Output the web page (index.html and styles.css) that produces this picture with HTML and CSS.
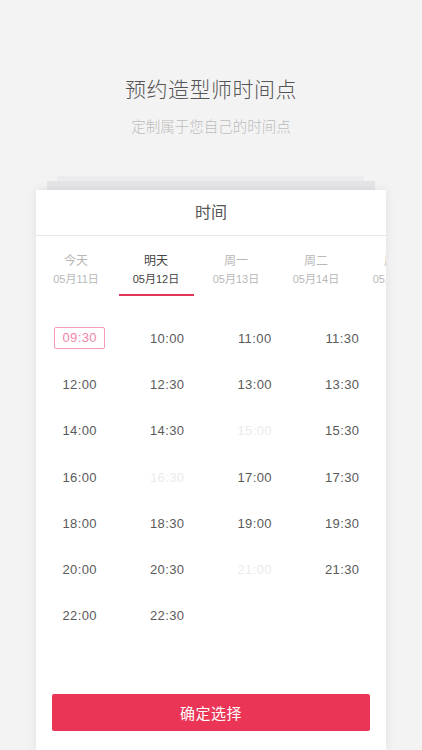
FILE: index.html
```html
<!DOCTYPE html>
<html lang="zh-CN">
<head>
  <meta charset="UTF-8">
  <meta name="viewport" content="width=device-width, initial-scale=1.0">
  <title>预约造型师时间点</title>
  <link rel="stylesheet" href="styles.css">
</head>
<body>
  <header class="intro">
    <h1>预约造型师时间点</h1>
    <p>定制属于您自己的时间点</p>
  </header>

  <div class="stack stack-back"></div>
  <div class="stack stack-mid"></div>

  <div class="card">
    <div class="card-title">时间</div>

    <div class="tabs">
      <div class="tab"><span class="tab-day">今天</span><span class="tab-date">05月11日</span></div>
      <div class="tab active"><span class="tab-day">明天</span><span class="tab-date">05月12日</span></div>
      <div class="tab"><span class="tab-day">周一</span><span class="tab-date">05月13日</span></div>
      <div class="tab"><span class="tab-day">周二</span><span class="tab-date">05月14日</span></div>
      <div class="tab"><span class="tab-day">周三</span><span class="tab-date">05月15日</span></div>
    </div>

    <div class="times">
      <div class="slot"><span class="selected">09:30</span></div>
      <div class="slot">10:00</div>
      <div class="slot">11:00</div>
      <div class="slot">11:30</div>
      <div class="slot">12:00</div>
      <div class="slot">12:30</div>
      <div class="slot">13:00</div>
      <div class="slot">13:30</div>
      <div class="slot">14:00</div>
      <div class="slot">14:30</div>
      <div class="slot disabled">15:00</div>
      <div class="slot">15:30</div>
      <div class="slot">16:00</div>
      <div class="slot disabled">16:30</div>
      <div class="slot">17:00</div>
      <div class="slot">17:30</div>
      <div class="slot">18:00</div>
      <div class="slot">18:30</div>
      <div class="slot">19:00</div>
      <div class="slot">19:30</div>
      <div class="slot">20:00</div>
      <div class="slot">20:30</div>
      <div class="slot disabled">21:00</div>
      <div class="slot">21:30</div>
      <div class="slot">22:00</div>
      <div class="slot">22:30</div>
    </div>

    <button class="confirm">确定选择</button>
  </div>
</body>
</html>
```

FILE: styles.css
```css
body {
  font-family: "Liberation Sans", "Noto Sans CJK SC", sans-serif;
  background-color: #f3f3f3;
  margin: 0;
  padding: 0;
  overflow: hidden;
}
.intro {
  text-align: center;
  padding-top: 75px;
  height: 101px;
}
.intro h1 {
  margin: 0;
  font-size: 21px;
  line-height: 30px;
  font-weight: 300;
  letter-spacing: 0.5px;
  color: #555;
}
.intro p {
  margin: 12px 0 0;
  font-size: 14.5px;
  line-height: 20px;
  font-weight: 300;
  color: #bdbdbd;
}
.stack {
  height: 5px;
}
.stack-back {
  margin: 0 58px 0 57px;
  background: #ececee;
}
.stack-mid {
  height: 9px;
  margin: 0 47px;
  background: #e5e5e8;
}
.card {
  margin: 0 36px;
  height: 560px;
  background: white;
  box-shadow: 0 0 10px rgba(0, 0, 0, 0.08);
  overflow: hidden;
}
.card-title {
  height: 45px;
  line-height: 45px;
  text-align: center;
  font-size: 16px;
  color: #555;
  border-bottom: 1px solid #e6e6e6;
}
.tabs {
  display: flex;
  padding-top: 16px;
}
.tab {
  flex: none;
  width: 80px;
  display: flex;
  flex-direction: column;
  align-items: center;
  color: #b8b8b8;
}
.tab::after {
  content: "";
  display: block;
  width: 75px;
  height: 2px;
  margin-top: 5px;
}
.tab-day {
  font-size: 12px;
  line-height: 18px;
}
.tab-date {
  font-size: 11px;
  line-height: 19px;
}
.tab.active {
  color: #444;
}
.tab.active::after {
  background: #e23658;
}
.times {
  display: grid;
  grid-template-columns: repeat(4, 1fr);
  grid-auto-rows: 46.3px;
  padding-top: 19px;
}
.slot {
  display: flex;
  align-items: center;
  justify-content: center;
  font-size: 13px;
  letter-spacing: 0.4px;
  color: #5a5a5a;
}
.slot.disabled {
  color: #ebebeb;
}
.selected {
  display: inline-block;
  padding: 0 7px;
  line-height: 20px;
  border: 1px solid #f29ab8;
  border-radius: 2px;
  color: #ef86ab;
}
.confirm {
  display: block;
  width: 318px;
  height: 37px;
  margin: 55px auto 0;
  border: none;
  border-radius: 2px;
  background: #ea3556;
  color: white;
  font-family: inherit;
  font-size: 15px;
  letter-spacing: 0.5px;
}
```
